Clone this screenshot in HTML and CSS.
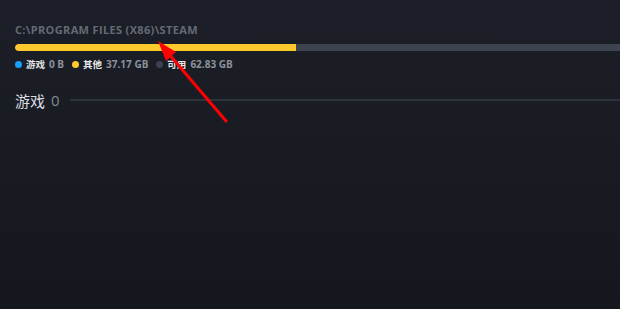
FILE: index.html
```html
<!DOCTYPE html>
<html>
<head>
<meta charset="utf-8">
<link rel="stylesheet" href="styles.css">
</head>
<body>
<div class="page">
  <div class="path">C:\PROGRAM FILES (X86)\STEAM</div>
  <div class="bar">
    <div class="bar-used" style="width:281px"></div>
  </div>
  <div class="legend">
    <span class="item"><span class="dot blue"></span><span class="label">游戏</span><span class="val">0 B</span></span>
    <span class="item"><span class="dot yellow"></span><span class="label">其他</span><span class="val">37.17 GB</span></span>
    <span class="item"><span class="dot grey"></span><span class="label">可用</span><span class="val">62.83 GB</span></span>
  </div>
  <div class="section">
    <span class="sec-title">游戏</span>
    <span class="sec-count">0</span>
    <span class="sec-line"></span>
  </div>
</div>
<svg class="arrow" width="620" height="309" viewBox="0 0 620 309">
  <line x1="226" y1="121" x2="168" y2="53" stroke="#ff0000" stroke-width="3" stroke-linecap="round"/>
  <polygon points="158,41 166,61 176,52" fill="#ff0000"/>
</svg>
</body>
</html>
```
FILE: styles.css
```css
html, body {
  margin: 0;
  padding: 0;
  width: 620px;
  height: 309px;
  overflow: hidden;
}
body {
  background: linear-gradient(180deg, #1c1f27 0%, #181b22 50%, #14171e 100%);
  font-family: "Open Sans", "Noto Sans CJK SC", sans-serif;
  position: relative;
}
.page {
  padding: 22px 0 0 15px;
  display: flex;
  flex-direction: column;
}
.path {
  color: #646a75;
  font-size: 11px;
  font-weight: 700;
  letter-spacing: 0.35px;
  line-height: 16px;
}
.bar {
  margin-top: 6px;
  height: 7px;
  background: #3e4350;
  border-radius: 4px 0 0 4px;
  display: flex;
  overflow: hidden;
}
.bar-used {
  background: #ffc82c;
  height: 100%;
  border-radius: 4px 0 0 4px;
}
.legend {
  margin-top: 7px;
  display: flex;
  gap: 8px;
  font-size: 10px;
  line-height: 12px;
  font-weight: 700;
}
.item {
  display: flex;
  align-items: center;
}
.dot {
  width: 7px;
  height: 7px;
  border-radius: 50%;
  margin: 0 4px 0 0;
}
.blue { background: #1a9fff; }
.yellow { background: #ffc82c; }
.grey { background: #3d4150; }
.label {
  color: #e4e6ea;
  margin-right: 4px;
  font-size: 9.5px;
  font-family: "Noto Sans CJK SC", sans-serif;
}
.val {
  color: #8b929c;
}
.section {
  margin-top: 20px;
  display: flex;
  align-items: center;
  height: 20px;
}
.sec-title {
  color: #dcdfe3;
  font-size: 15px;
  font-family: "Noto Sans CJK SC", sans-serif;
}
.sec-count {
  color: #848a93;
  font-size: 15px;
  margin-left: 6px;
}
.sec-line {
  flex: 1;
  height: 2px;
  background: #2e323a;
  margin-left: 10px;
}
.arrow {
  position: absolute;
  left: 0;
  top: 0;
  pointer-events: none;
}
```
